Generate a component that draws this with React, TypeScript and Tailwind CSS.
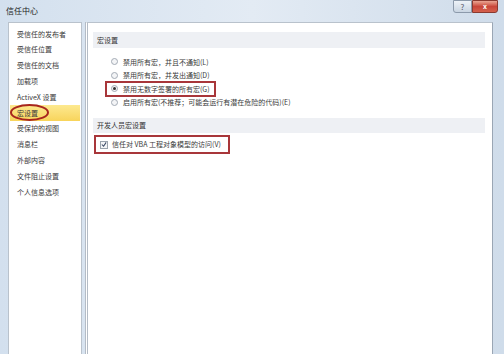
const font = "font-['Noto_Sans_CJK_SC','Noto_Sans',sans-serif]";

const navItems = [
  "受信任的发布者",
  "受信任位置",
  "受信任的文档",
  "加载项",
  "ActiveX 设置",
  "宏设置",
  "受保护的视图",
  "消息栏",
  "外部内容",
  "文件阻止设置",
  "个人信息选项",
];

const radios = [
  "禁用所有宏，并且不通知(L)",
  "禁用所有宏，并发出通知(D)",
  "禁用无数字签署的所有宏(G)",
  "启用所有宏(不推荐；可能会运行有潜在危险的代码)(E)",
];

function Radio({ on }: { on: boolean }) {
  return (
    <span className="w-[7px] h-[7px] rounded-full border border-[#a3abb5] bg-[#f3f4f6] flex items-center justify-center shrink-0">
      {on ? <span className="w-[3px] h-[3px] rounded-full bg-[#333]" /> : null}
    </span>
  );
}

export default function App() {
  return (
    <div className={`w-[504px] h-[354px] overflow-hidden flex flex-col bg-gradient-to-r from-[#d3e0ee] via-[#e3ebf4] to-[#cfdcea] text-[#3a3a3a] ${font}`}>
      <div className="h-[22px] flex items-center justify-between pl-[6px] pr-[6px] shrink-0">
        <span className="text-[8px] text-[#222]">信任中心</span>
        <div className="flex self-start">
          <span className="w-[19px] h-[13px] border border-[#8c9aab] rounded-bl-[3px] bg-gradient-to-b from-[#eef3f8] to-[#c9d5e2] text-[8px] text-[#556] flex items-center justify-center">?</span>
          <span className="w-[26px] h-[13px] border border-[#8a3a30] rounded-br-[3px] bg-gradient-to-b from-[#e9a593] via-[#c9463a] to-[#d4604c] text-[7px] text-white flex items-center justify-center font-bold">x</span>
        </div>
      </div>
      <div className="flex-1 flex pl-[8px] pr-[11px] gap-[3px] min-h-0">
        <div className="w-[74px] bg-white border border-[#b9c2cc] border-b-0 pt-[3px] pl-[1px] pr-[1px]">
          {navItems.map((t) => (
            <div
              key={t}
              className={`h-[15.8px] flex items-center pl-[7px] text-[7px] whitespace-nowrap ${t === "宏设置" ? "bg-gradient-to-b from-[#fde98f] to-[#f8d45a] relative" : ""}`}
            >
              {t}
              {t === "宏设置" ? (
                <span className="absolute left-[0px] top-[-1px] w-[39px] h-[17px] rounded-[50%] border-2 border-[#a8261e]" />
              ) : null}
            </div>
          ))}
        </div>
        <div className="flex-1 bg-white border-l-[3px] border-double border-l-[#b4bcc6] border-r border-r-[#9aa6b4] border-t border-t-[#b9c2cc] pt-[9px] pl-[5px] pr-[7px]">
          <div className="h-[16px] bg-[#eef0f4] flex items-center pl-[4px] text-[7px] text-[#333]">宏设置</div>
          <div className="flex flex-col pt-[7px] pl-[17px]">
            {radios.map((t, i) => (
              <div key={t} className="h-[13.5px] flex items-center">
                <div className={`flex items-center gap-[5px] h-[16px] pl-[4px] pr-[4px] -ml-[5px] border-2 ${i === 2 ? "border-[#a8363a]" : "border-transparent"}`}>
                  <Radio on={i === 2} />
                  <span className="text-[7px] whitespace-nowrap">{t}</span>
                </div>
              </div>
            ))}
          </div>
          <div className="mt-[9px] h-[15px] bg-[#eef0f4] flex items-center pl-[4px] text-[7px] text-[#333]">开发人员宏设置</div>
          <div className="mt-[2px] ml-[1px] w-[136px] h-[19px] border-2 border-[#a8363a] flex items-center pl-[4px] gap-[4px]">
            <span className="w-[8px] h-[8px] border border-[#9aa3ad] bg-[#f3f4f6] flex items-center justify-center">
              <svg width="7" height="7" viewBox="0 0 7 7">
                <path d="M1 3.5 L3 5.5 L6 1" fill="none" stroke="#3b4a66" strokeWidth="1.2" />
              </svg>
            </span>
            <span className="text-[7px] whitespace-nowrap">信任对 VBA 工程对象模型的访问(V)</span>
          </div>
        </div>
      </div>
    </div>
  );
}
